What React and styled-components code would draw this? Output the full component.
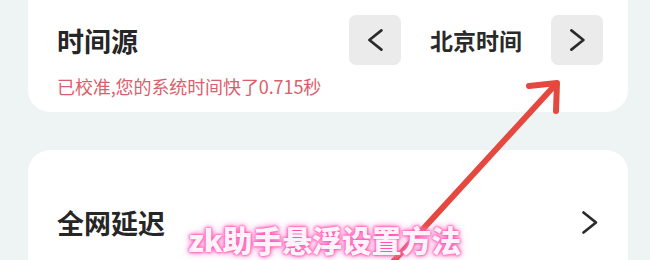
import React from "react";
import styled, { createGlobalStyle } from "styled-components";

const Global = createGlobalStyle`
  html, body { margin: 0; padding: 0; }
  body {
    width: 650px;
    height: 260px;
    overflow: hidden;
    background: #eef3f4;
    font-family: "Noto Sans CJK SC", "Noto Sans", sans-serif;
  }
`;

const Page = styled.div`
  position: relative;
  width: 650px;
  height: 260px;
  overflow: hidden;
  padding: 0 22px 0 28px;
  box-sizing: border-box;
  display: flex;
  flex-direction: column;
  gap: 38px;
`;

const Card = styled.div`
  background: #ffffff;
  border-radius: 22px;
  box-sizing: border-box;
  display: flex;
  flex-direction: column;
  flex-shrink: 0;
  height: ${(p) => p.$h}px;
  margin-top: ${(p) => p.$mt || 0}px;
  padding: ${(p) => p.$pad};
`;

const Row = styled.div`
  display: flex;
  align-items: center;
  justify-content: space-between;
`;

const Title = styled.div`
  font-size: 27px;
  font-weight: 700;
  color: #262626;
  letter-spacing: 0px;
  line-height: 1;
`;

const Sub = styled.div`
  margin-top: 12px;
  font-size: 18px;
  color: #d9606b;
  line-height: 1;
  letter-spacing: -0.1px;
`;

const Picker = styled.div`
  display: flex;
  align-items: center;
  margin-right: 25px;
`;

const NavBtn = styled.div`
  width: 52px;
  height: 50px;
  border-radius: 7px;
  background: #ebebeb;
  display: flex;
  align-items: center;
  justify-content: center;
`;

const PickerLabel = styled.div`
  width: 150px;
  text-align: center;
  font-size: 23px;
  font-weight: 700;
  color: #2a2a2a;
  line-height: 1;
`;

const Chevron = ({ dir = "right", size = 24 }) => (
  <svg width={size * 0.7} height={size} viewBox="0 0 14 20" fill="none">
    <path
      d={dir === "right" ? "M2 2 L12 10 L2 18" : "M12 2 L2 10 L12 18"}
      stroke="#2b2b2b"
      strokeWidth="2.2"
      strokeLinecap="round"
      strokeLinejoin="round"
    />
  </svg>
);

const ChevronSlot = styled.div`
  margin-right: 30px;
  display: flex;
`;

const ArrowLayer = styled.svg`
  position: absolute;
  left: 0;
  top: 0;
  pointer-events: none;
`;

const Caption = styled.div`
  position: absolute;
  left: 188px;
  top: 224px;
  font-size: 30px;
  font-weight: 900;
  color: #fff3fa;
  line-height: 1;
  letter-spacing: -0.2px;
  text-shadow: 0 0 2px #ff4fb0, 0 0 3px #ff4fb0, 0 0 5px #ff6fc0, 0 0 8px #ff8fd0;
`;

export default function App() {
  return (
    <>
      <Global />
      <Page>
        <Card $h={132} $mt={-20} $pad="35px 0 0 29px">
          <Row>
            <Title>时间源</Title>
            <Picker>
              <NavBtn>
                <Chevron dir="left" />
              </NavBtn>
              <PickerLabel>北京时间</PickerLabel>
              <NavBtn>
                <Chevron dir="right" />
              </NavBtn>
            </Picker>
          </Row>
          <Sub>已校准,您的系统时间快了0.715秒</Sub>
        </Card>
        <Card $h={160} $pad="59px 0 0 29px">
          <Row>
            <Title>全网延迟</Title>
            <ChevronSlot>
              <Chevron dir="right" size={25} />
            </ChevronSlot>
          </Row>
        </Card>
        <ArrowLayer width="650" height="260" viewBox="0 0 650 260">
          <g stroke="#e5483f" strokeWidth="6" strokeLinecap="round" strokeLinejoin="round" fill="none">
            <path d="M390 265 L556 84" />
            <path d="M529 86 L557 83 L556 111" />
          </g>
        </ArrowLayer>
        <Caption>zk助手悬浮设置方法</Caption>
      </Page>
    </>
  );
}
